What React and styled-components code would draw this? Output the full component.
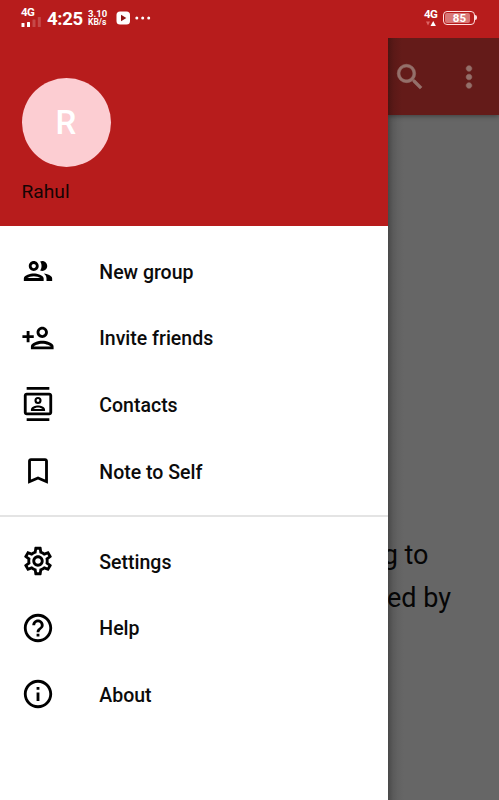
import React from 'react';
import styled, { createGlobalStyle } from 'styled-components';
import {
  MdOutlineGroup,
  MdOutlinePersonAdd,
  MdOutlineContacts,
  MdBookmarkBorder,
  MdOutlineSettings,
  MdHelpOutline,
  MdInfoOutline,
  MdSearch,
  MdMoreVert,
} from 'react-icons/md';

const GlobalStyle = createGlobalStyle`
  *, *::before, *::after { box-sizing: border-box; }
  body { margin: 0; font-family: Roboto, sans-serif; }
`;

const Screen = styled.div`
  width: 499px;
  height: 800px;
  display: flex;
  flex-direction: column;
  overflow: hidden;
  background: #666;
`;

const StatusBar = styled.header`
  height: 38px;
  flex: none;
  display: flex;
  justify-content: space-between;
  padding: 0 22px 0 21px;
  background: #b71c1c;
  color: #fff;
`;

const StatusGroup = styled.div`
  display: flex;
  align-items: center;
  height: 36px;
`;

const Network = styled.div`
  width: ${(p) => p.$width}px;
  font-size: 11.5px;
  line-height: 11px;
  font-weight: 700;
  letter-spacing: -0.5px;
  svg { display: block; margin-top: -1px; }
`;

const Clock = styled.div`
  width: 41px;
  font-size: 18.5px;
  font-weight: 700;
  letter-spacing: -0.3px;
  line-height: 36px;
  padding-top: 1px;
`;

const Speed = styled.div`
  width: 28px;
  display: flex;
  flex-direction: column;
  font-size: 9.5px;
  line-height: 9px;
  font-weight: 700;
  white-space: pre;
`;

const SpeedUnit = styled.span`
  font-size: 8.5px;
`;

const StatusIcon = styled.svg`
  display: block;
  flex: none;
`;

const Battery = styled.div`
  width: 32px;
  height: 14px;
  margin-right: 2px;
  position: relative;
  border: 1.4px solid #ffdcdc;
  border-radius: 4px;
  padding: 1px;
  &::after {
    content: '';
    position: absolute;
    right: -3px;
    top: 3px;
    width: 2px;
    height: 5px;
    border-radius: 0 2px 2px 0;
    background: #ffdcdc;
  }
`;

const Charge = styled.div`
  width: 25px;
  height: 10px;
  border-radius: 2px;
  background: #d97776;
  font-size: 11.5px;
  line-height: 10.5px;
  font-weight: 700;
  text-align: right;
  padding-right: 4px;
`;

const Stage = styled.main`
  flex: 1;
  display: grid;
  grid-template: 1fr / 388px 1fr;
`;

const Drawer = styled.aside`
  display: flex;
  flex-direction: column;
  background: #fff;
`;

const Profile = styled.div`
  height: 188px;
  padding: 39.5px 21.5px 0;
  background: #b71c1c;
`;

const Avatar = styled.div`
  width: 89px;
  height: 89px;
  border-radius: 50%;
  display: grid;
  place-items: center;
  background: #fccdd2;
  color: #fff;
  font-size: 33px;
  font-weight: 500;
`;

const UserName = styled.div`
  margin-top: 13.5px;
  font-size: 19.2px;
  line-height: 24px;
  color: #160404;
`;

const Menu = styled.nav`
  padding-top: ${(p) => p.$top}px;
`;

const MenuItem = styled.a`
  height: 66.65px;
  display: flex;
  align-items: center;
  padding-left: 21px;
  color: #0b0b0b;
  font-size: 19.5px;
  font-weight: 500;
  svg {
    width: 34px;
    height: 34px;
    margin-right: 44.3px;
    flex: none;
    color: #000;
    stroke-width: 0;
  }
`;

const Label = styled.span`
  padding-top: 2.4px;
`;

const Divider = styled.div`
  height: 2px;
  margin-top: 10.4px;
  background: #e4e4e4;
`;

const Backdrop = styled.section`
  overflow: hidden;
  display: flex;
  flex-direction: column;
  background: linear-gradient(90deg, #484848 0, #5a5a5a 5px, #626262 10px, #666 16px);
`;

const Toolbar = styled.div`
  height: 77px;
  display: flex;
  align-items: center;
  padding-left: 5px;
  gap: 25px;
  color: #94706a;
  background: linear-gradient(90deg, #4b1513 0, #5b1917 6px, #641b19 14px);
  box-shadow: 0 1px 5px rgba(0, 0, 0, 0.4);
  svg { width: 34px; height: 34px; stroke-width: 0.4px; }
  path[fill='none'] { stroke: none; }
`;

const Message = styled.p`
  margin: 418.5px 0 0;
  font-size: 27px;
  line-height: 43.5px;
  color: #060606;
  white-space: nowrap;
`;

const MessageLine = styled.span`
  display: flex;
  justify-content: flex-end;
  width: ${(p) => p.$end}px;
`;

const mainItems = [
  [MdOutlineGroup, 'New group'],
  [MdOutlinePersonAdd, 'Invite friends'],
  [MdOutlineContacts, 'Contacts'],
  [MdBookmarkBorder, 'Note to Self'],
];

const moreItems = [
  [MdOutlineSettings, 'Settings'],
  [MdHelpOutline, 'Help'],
  [MdInfoOutline, 'About'],
];

const renderItem = ([Icon, label]) => (
  <MenuItem key={label}>
    <Icon />
    <Label>{label}</Label>
  </MenuItem>
);

export default function App() {
  return (
    <Screen>
      <GlobalStyle />
      <StatusBar>
        <StatusGroup>
          <Network $width={26}>
            4G
            <svg width="20" height="12" viewBox="0 0 20 12" fill="#fff">
              <rect x="0.5" y="6" width="3" height="4" rx=".5" />
              <rect x="6" y="5" width="3" height="5" rx=".5" />
              <rect x="11.5" y="2.5" width="3" height="7.5" rx=".5" opacity=".2" />
              <rect x="16.8" y="0" width="3" height="10" rx=".5" opacity=".2" />
            </svg>
          </Network>
          <Clock>4:25</Clock>
          <Speed>
            <span>3.10</span>
            <SpeedUnit>KB/s</SpeedUnit>
          </Speed>
          <StatusIcon width="36" height="14" viewBox="0 0 36 14" fill="#fff">
            <rect x="0.5" y="0.5" width="13.5" height="13" rx="3.5" />
            <path d="M5 3.7v6.6l5.3-3.3z" fill="#8e1515" />
            <circle cx="20.8" cy="7" r="1.5" />
            <circle cx="26.7" cy="7" r="1.5" />
            <circle cx="32.7" cy="7" r="1.5" />
          </StatusIcon>
        </StatusGroup>
        <StatusGroup>
          <Network $width={19}>
            4G
            <svg width="14" height="8" viewBox="0 0 14 8">
              <path d="M2 2.5h4L4 6.5z" fill="#d66" />
              <path d="M6.5 7h5.4L9.2 2z" fill="#fff" />
            </svg>
          </Network>
          <Battery>
            <Charge>85</Charge>
          </Battery>
        </StatusGroup>
      </StatusBar>
      <Stage>
        <Drawer>
          <Profile>
            <Avatar>R</Avatar>
            <UserName>Rahul</UserName>
          </Profile>
          <Menu $top={11.6}>{mainItems.map(renderItem)}</Menu>
          <Divider />
          <Menu $top={11.2}>{moreItems.map(renderItem)}</Menu>
        </Drawer>
        <Backdrop>
          <Toolbar>
            <MdSearch />
            <MdMoreVert />
          </Toolbar>
          <Message>
            <MessageLine $end={40.5}>g to</MessageLine>
            <MessageLine $end={63}>ed by</MessageLine>
          </Message>
        </Backdrop>
      </Stage>
    </Screen>
  );
}
